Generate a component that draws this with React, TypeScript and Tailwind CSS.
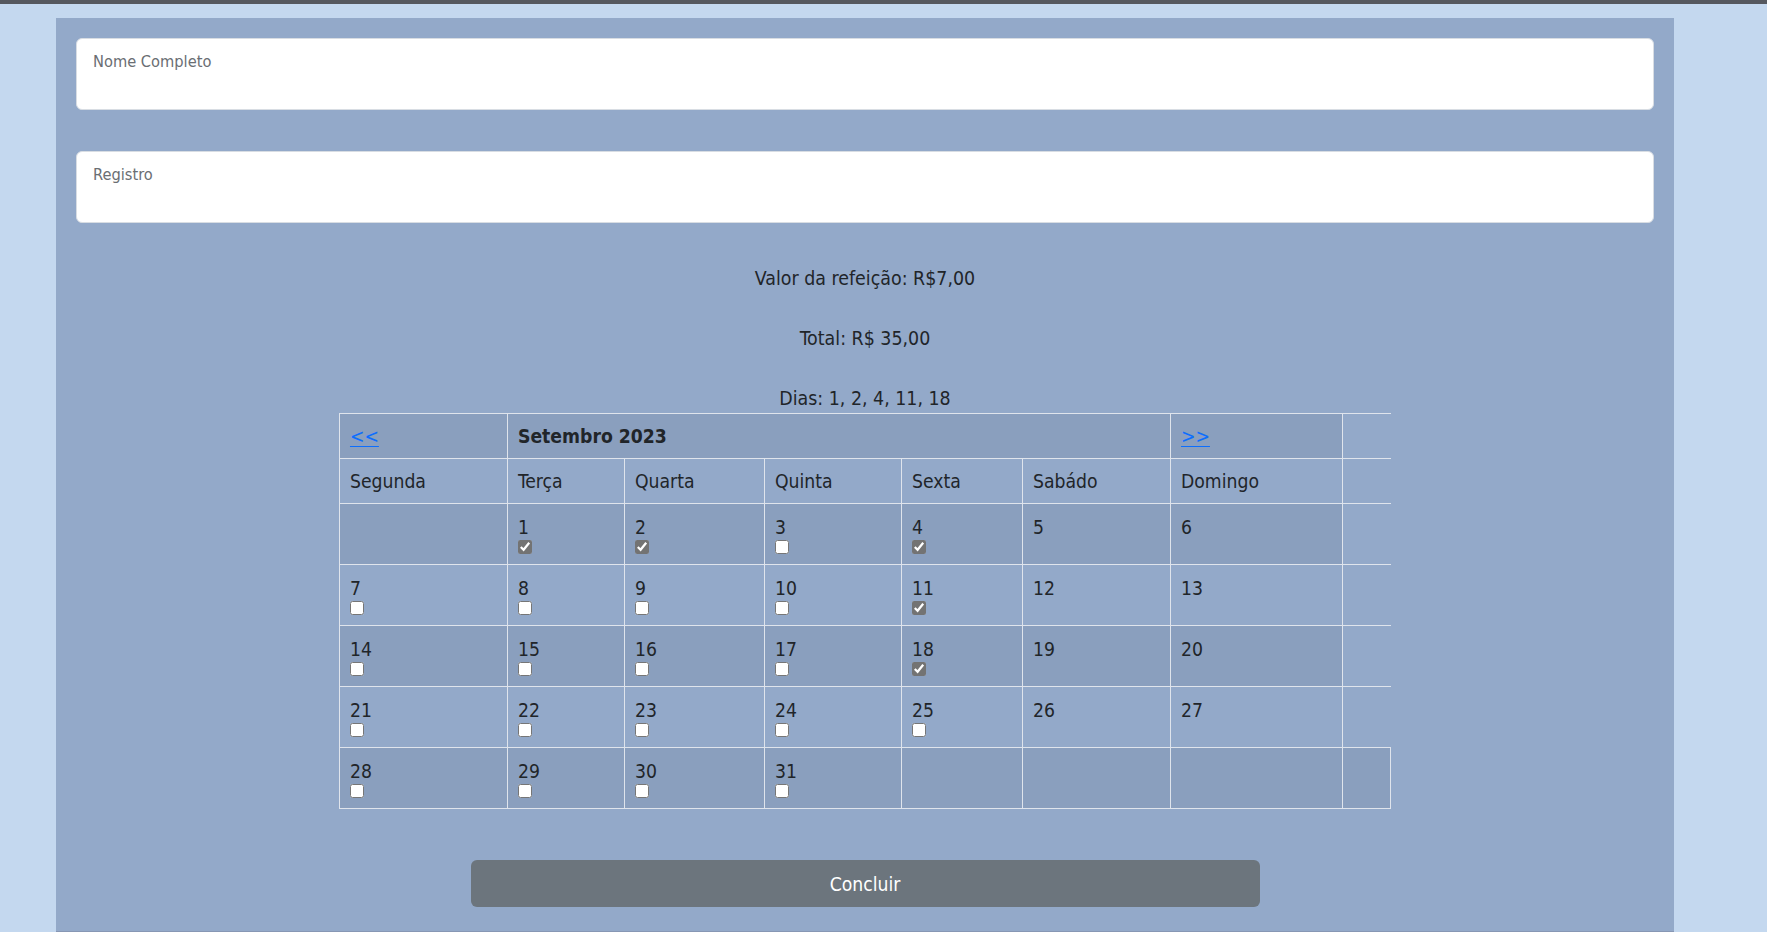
import { useState } from 'react';

const FONT = "font-['DejaVu_Sans_Condensed','DejaVu_Sans',sans-serif] font-stretch-condensed";

// semana começa na segunda; setembro 2023 aqui começa na terça
const WEEKS: (number | null)[][] = [
  [null, 1, 2, 3, 4, 5, 6],
  [7, 8, 9, 10, 11, 12, 13],
  [14, 15, 16, 17, 18, 19, 20],
  [21, 22, 23, 24, 25, 26, 27],
  [28, 29, 30, 31, null, null, null],
];

const DAY_NAMES = ['Segunda', 'Terça', 'Quarta', 'Quinta', 'Sexta', 'Sabádo', 'Domingo'];
const COL_WIDTHS = [168, 117, 140, 137, 121, 148, 172, 48];
const PRICE = 7;

export default function App() {
  const [checked, setChecked] = useState<number[]>([1, 2, 4, 11, 18]);

  function toggle(d: number) {
    setChecked((c) => (c.includes(d) ? c.filter((x) => x !== d) : [...c, d].sort((a, b) => a - b)));
  }

  const total = (checked.length * PRICE).toFixed(2).replace('.', ',');
  const cell = 'border border-[#dfe4ec] px-[10px]';
  const stripe = 'bg-[#8a9fbe]';
  // coluna extra à direita: só linhas horizontais, sem fundo
  const extra = 'border-y border-[#dfe4ec]';

  return (
    <div className={`min-h-screen bg-[#c4d8ef] text-[#212529] ${FONT}`}>
      <div className="h-[4px] bg-[#55585f]" />
      <div className="ml-[56px] mt-[14px] w-[1618px] bg-[#93a9c9] px-[20px] pt-[20px] pb-[24px] border-b border-[#8797b4]">
        <input
          placeholder="Nome Completo"
          className="block h-[72px] w-full rounded-[6px] border border-[#d8dde3] bg-white px-[16px] pt-[11px] pb-[37px] text-[16.3px] outline-none placeholder:text-[#6a6e73]"
        />
        <input
          placeholder="Registro"
          className="mt-[41px] block h-[72px] w-full rounded-[6px] border border-[#d8dde3] bg-white px-[16px] pt-[11px] pb-[37px] text-[16.3px] outline-none placeholder:text-[#6a6e73]"
        />

        <div className="flex flex-col items-center text-[19.4px] leading-[28.8px]">
          <p className="mt-[42px]">Valor da refeição: R$7,00</p>
          <p className="mt-[31px]">Total: R$ {total}</p>
          <p className="mt-[31px]">Dias: {checked.join(', ')}</p>
        </div>

        <table className="mx-auto mt-0 w-[1051px] table-fixed border-collapse text-[19.2px] leading-[28.8px]">
          <colgroup>
            {COL_WIDTHS.map((w, i) => (
              <col key={i} style={{ width: w }} />
            ))}
          </colgroup>
          <tbody>
            <tr className="h-[45px]">
              <td className={`${cell} ${stripe} pt-[2px]`}>
                <a href="#" className="text-[#0d6efd] underline underline-offset-[3px]">&lt;&lt;</a>
              </td>
              <td colSpan={5} className={`${cell} ${stripe} pt-[2px] font-bold`}>Setembro 2023</td>
              <td className={`${cell} ${stripe} pt-[2px]`}>
                <a href="#" className="text-[#0d6efd] underline underline-offset-[3px]">&gt;&gt;</a>
              </td>
              <td className={extra} />
            </tr>
            <tr className="h-[45px]">
              {DAY_NAMES.map((n) => (
                <td key={n} className={`${cell} pt-[2px]`}>{n}</td>
              ))}
              <td className={extra} />
            </tr>
            {WEEKS.map((week, wi) => {
              const last = wi === WEEKS.length - 1;
              return (
                <tr key={wi} className="h-[61px]">
                  {week.map((d, di) => (
                    <td key={di} className={`${cell} ${wi % 2 === 0 ? stripe : ''} pt-[11px] align-top`}>
                      {d !== null && (
                        <>
                          <div className="h-[25px] leading-[26px]">{d}</div>
                          {di < 5 && (
                            <input
                              type="checkbox"
                              checked={checked.includes(d)}
                              onChange={() => toggle(d)}
                              className="block h-[14px] w-[14px] accent-[#737373]"
                            />
                          )}
                        </>
                      )}
                    </td>
                  ))}
                  {last ? <td className={`${cell} ${stripe}`} /> : <td className={extra} />}
                </tr>
              );
            })}
          </tbody>
        </table>

        <button
          type="button"
          className="mx-auto mt-[51px] block h-[47px] w-[789px] rounded-[6px] bg-[#6c757d] pt-[3px] text-[19.2px] text-white"
        >
          Concluir
        </button>
      </div>
    </div>
  );
}
